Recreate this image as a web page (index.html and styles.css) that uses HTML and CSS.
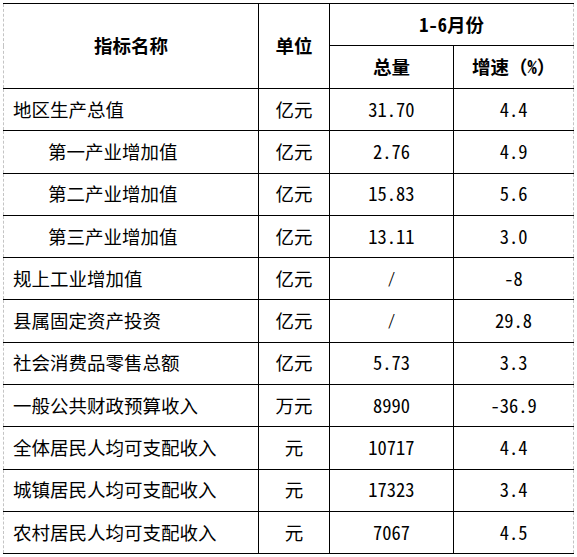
FILE: index.html
```html
<!DOCTYPE html>
<html lang="zh-CN">

<head>
    <meta charset="UTF-8">
    <meta name="viewport" content="width=device-width, initial-scale=1.0">
    <title>1-6月份主要经济指标</title>
    <link rel="stylesheet" href="styles.css">
</head>

<body>
    <table class="grid">
        <colgroup>
            <col class="w-name">
            <col class="w-unit">
            <col class="w-total">
            <col class="w-rate">
        </colgroup>
        <thead>
            <tr class="head-top">
                <th class="name" rowspan="2">指标名称</th>
                <th rowspan="2">单位</th>
                <th class="rate" colspan="2">1-6月份</th>
            </tr>
            <tr class="head-sub">
                <th>总量</th>
                <th class="rate">增速（%）</th>
            </tr>
        </thead>
        <tbody>
            <tr>
                <td class="name">地区生产总值</td>
                <td>亿元</td>
                <td>31.70</td>
                <td class="rate">4.4</td>
            </tr>
            <tr>
                <td class="name sub">第一产业增加值</td>
                <td>亿元</td>
                <td>2.76</td>
                <td class="rate">4.9</td>
            </tr>
            <tr>
                <td class="name sub">第二产业增加值</td>
                <td>亿元</td>
                <td>15.83</td>
                <td class="rate">5.6</td>
            </tr>
            <tr>
                <td class="name sub">第三产业增加值</td>
                <td>亿元</td>
                <td>13.11</td>
                <td class="rate">3.0</td>
            </tr>
            <tr>
                <td class="name">规上工业增加值</td>
                <td>亿元</td>
                <td class="slash">/</td>
                <td class="rate">-8</td>
            </tr>
            <tr>
                <td class="name">县属固定资产投资</td>
                <td>亿元</td>
                <td class="slash">/</td>
                <td class="rate">29.8</td>
            </tr>
            <tr>
                <td class="name">社会消费品零售总额</td>
                <td>亿元</td>
                <td>5.73</td>
                <td class="rate">3.3</td>
            </tr>
            <tr>
                <td class="name">一般公共财政预算收入</td>
                <td>万元</td>
                <td>8990</td>
                <td class="rate">-36.9</td>
            </tr>
            <tr>
                <td class="name">全体居民人均可支配收入</td>
                <td>元</td>
                <td>10717</td>
                <td class="rate">4.4</td>
            </tr>
            <tr>
                <td class="name">城镇居民人均可支配收入</td>
                <td>元</td>
                <td>17323</td>
                <td class="rate">3.4</td>
            </tr>
            <tr>
                <td class="name">农村居民人均可支配收入</td>
                <td>元</td>
                <td>7067</td>
                <td class="rate">4.5</td>
            </tr>
        </tbody>
    </table>
</body>

</html>
```

FILE: styles.css
```css
* {
    margin: 0;
    padding: 0;
}

body {
    background: #fff;
    padding: 3px;
    font-family: "Noto Sans Mono CJK SC", "Noto Sans CJK SC", sans-serif;
    font-size: 18.5px;
    color: #000;
}

.grid {
    width: 570px;
    table-layout: fixed;
    border-collapse: collapse;
    border-top: 1px solid #000;
    border-bottom: 1px solid #000;
    border-left: 1px dashed #c4c4c4;
    border-right: 1px dashed #c4c4c4;
}

.w-name {
    width: 255px;
}

.w-unit {
    width: 71px;
}

.w-total {
    width: 124px;
}

.w-rate {
    width: 120px;
}

.grid th,
.grid td {
    border: 1px solid #000;
    text-align: center;
    vertical-align: middle;
    line-height: 24px;
    padding-bottom: 2px;
    font-weight: normal;
}

.grid th {
    font-weight: bold;
}

.grid .name {
    border-left: none;
}

.grid .rate {
    border-right: none;
}

.grid td.name {
    text-align: left;
    padding-left: 9px;
}

.grid td.sub {
    padding-left: 44px;
}

.head-top {
    height: 42px;
}

.head-sub {
    height: 43px;
}

tbody tr {
    height: 42.3px;
}

.slash {
    font-size: 15px;
}
```
